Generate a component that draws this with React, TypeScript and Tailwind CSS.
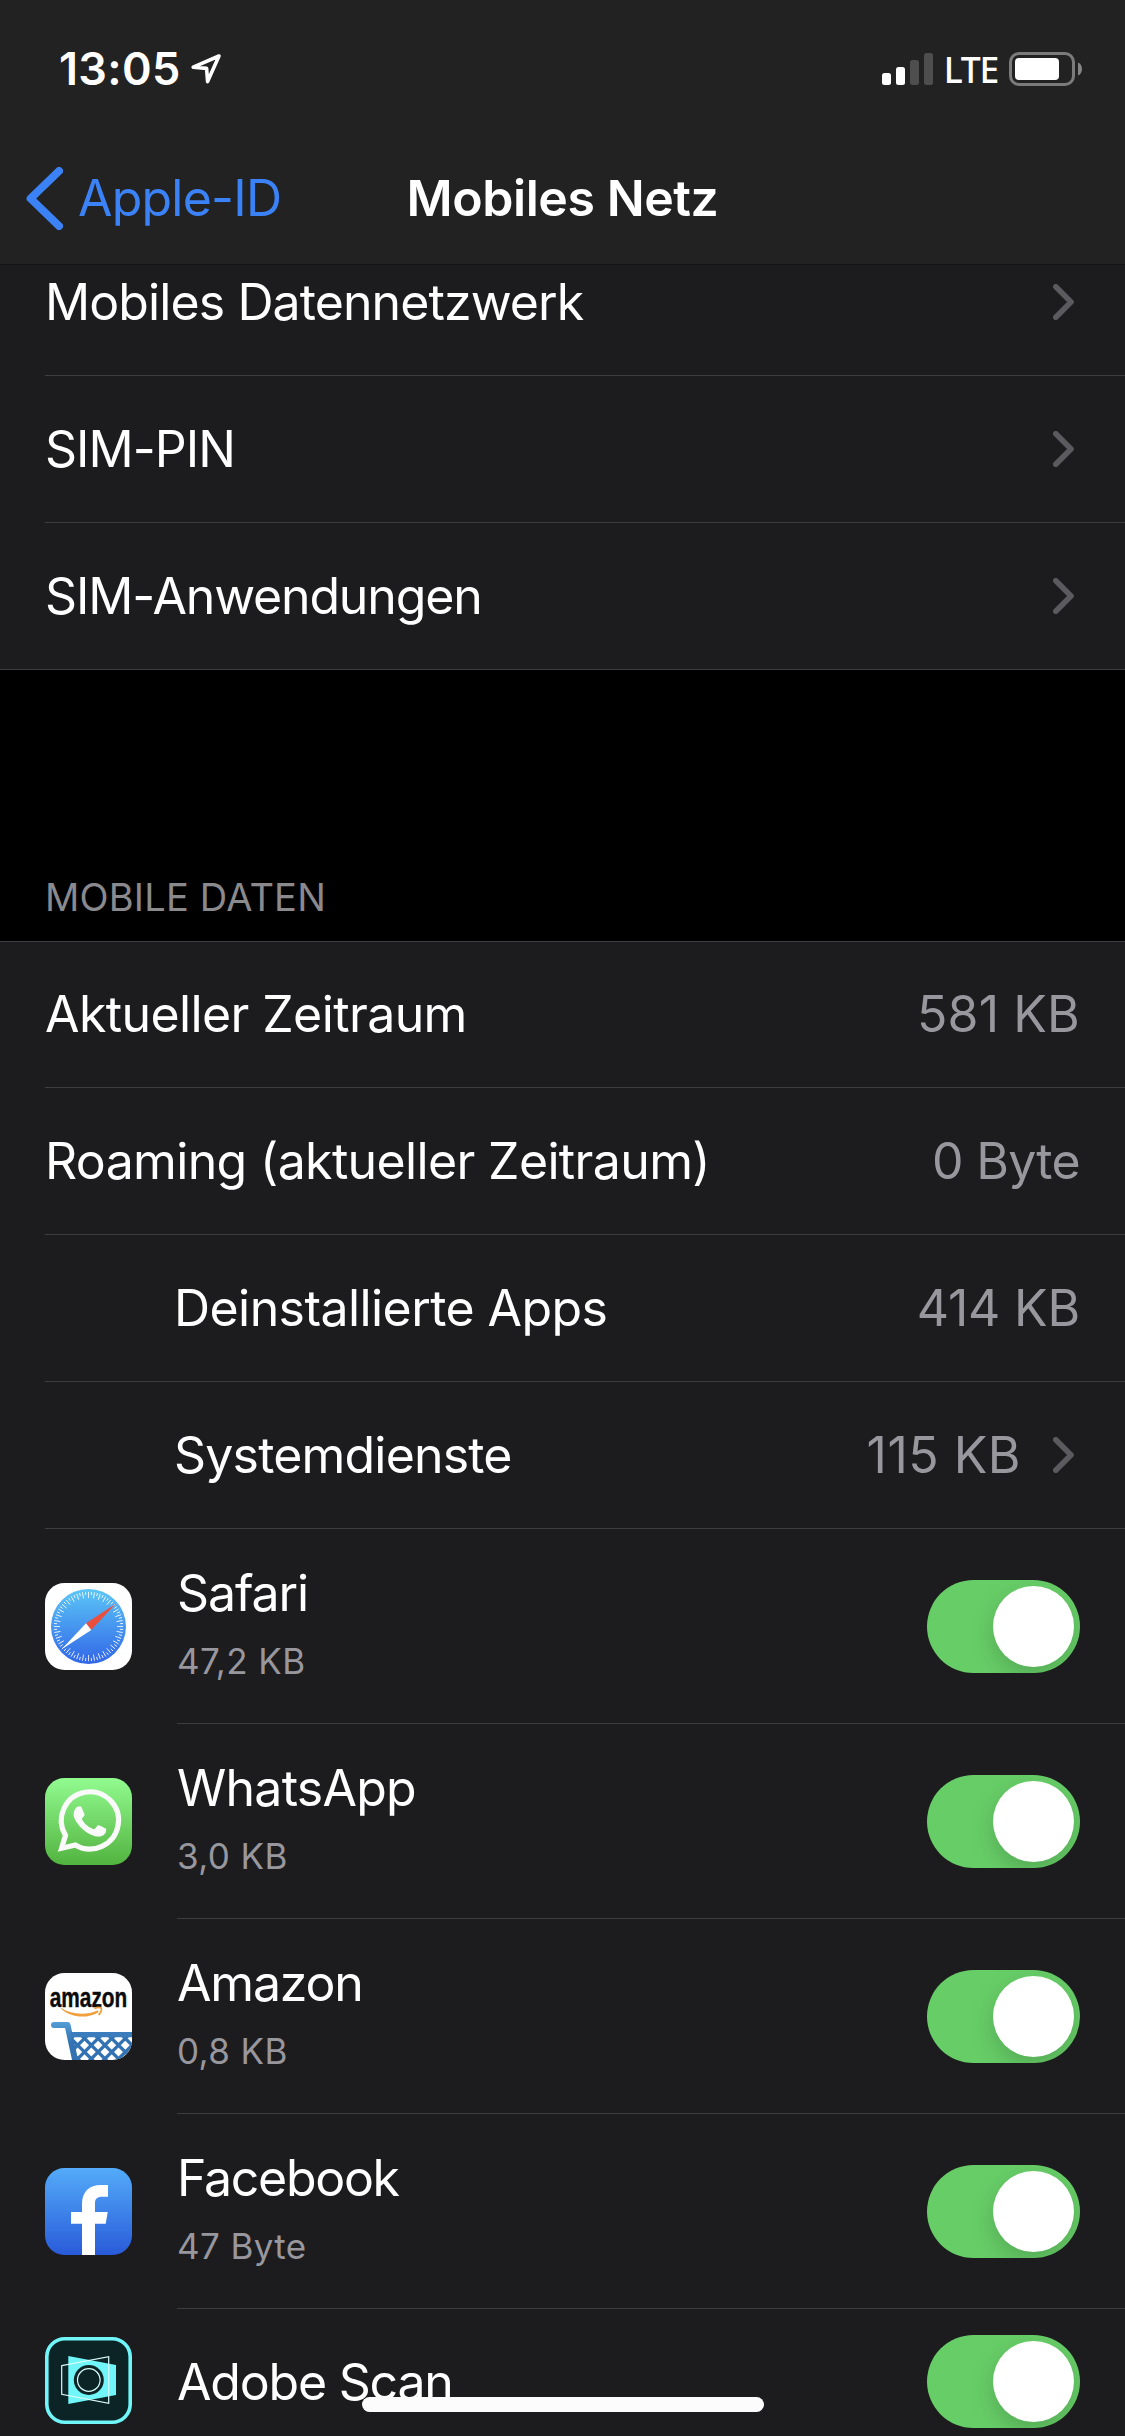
import React from 'react';

const SafariIcon = () => (
  <svg width="87" height="87" viewBox="0 0 87 87" className="shrink-0">
    <defs>
      <linearGradient id="safari" x1="0" y1="0" x2="0" y2="1">
        <stop offset="0" stopColor="#5cc6f6" />
        <stop offset="1" stopColor="#3166e8" />
      </linearGradient>
    </defs>
    <rect width="87" height="87" rx="19.5" fill="#fff" />
    <circle cx="43.5" cy="43.5" r="37.5" fill="url(#safari)" />
    {Array.from({ length: 72 }, (_, i) => (
      <line
        key={i}
        x1="43.5"
        y1="8.8"
        x2="43.5"
        y2={i % 2 ? 12 : 15}
        stroke="#fff"
        strokeWidth="0.8"
        transform={`rotate(${i * 5} 43.5 43.5)`}
      />
    ))}
    <path d="M70.7 20.7 41 40.3l5.3 6.7z" fill="#ea4f3d" />
    <path d="M16.7 66.3 41 40.3l5.3 6.7z" fill="#fff" />
  </svg>
);

const WhatsAppIcon = () => (
  <svg width="87" height="87" viewBox="0 0 87 87" className="shrink-0">
    <defs>
      <linearGradient id="whatsapp" x1="0" y1="0" x2="0" y2="1">
        <stop offset="0" stopColor="#92fb90" />
        <stop offset="1" stopColor="#52b33f" />
      </linearGradient>
    </defs>
    <rect width="87" height="87" rx="19.5" fill="url(#whatsapp)" />
    <path
      d="M16.6 70.2 20.5 57.3A28.6 28.6 0 1 1 30.3 67z"
      fill="none"
      stroke="#fafafa"
      strokeWidth="5.2"
    />
    <path
      transform="translate(12.4 11.4) scale(2.7 2.68)"
      fill="#fafafa"
      d="M17.472 14.382c-.297-.149-1.758-.867-2.03-.967-.273-.099-.471-.148-.67.15-.197.297-.767.966-.94 1.164-.173.199-.347.223-.644.075-.297-.15-1.255-.463-2.39-1.475-.883-.788-1.48-1.761-1.653-2.059-.173-.297-.018-.458.13-.606.134-.133.298-.347.446-.52.149-.174.198-.298.298-.497.099-.198.05-.371-.025-.52-.075-.149-.669-1.612-.916-2.207-.242-.579-.487-.5-.669-.51-.173-.008-.371-.01-.57-.01-.198 0-.52.074-.792.372-.272.297-1.04 1.016-1.04 2.479 0 1.462 1.065 2.875 1.213 3.074.149.198 2.096 3.2 5.077 4.487.709.306 1.262.489 1.694.625.712.227 1.36.195 1.871.118.571-.085 1.758-.719 2.006-1.413.248-.694.248-1.289.173-1.413-.074-.124-.272-.198-.57-.347"
    />
  </svg>
);

const AmazonIcon = () => (
  <svg width="87" height="87" viewBox="0 0 87 87" className="shrink-0">
    <defs>
      <linearGradient id="cart" gradientUnits="userSpaceOnUse" x1="0" y1="49" x2="0" y2="70">
        <stop offset="0" stopColor="#549dd5" />
        <stop offset="1" stopColor="#3272b2" />
      </linearGradient>
      <clipPath id="tile">
        <rect width="87" height="87" rx="19.5" />
      </clipPath>
      <clipPath id="basket">
        <path d="M26 60H87V87H31z" />
      </clipPath>
    </defs>
    <rect width="87" height="87" rx="19.5" fill="#fff" />
    <text
      transform="translate(4.8 34) scale(0.77 1)"
      className="font-['Liberation_Sans',sans-serif] text-[27px] font-bold"
      fill="#0b0b0b"
      stroke="#0b0b0b"
      strokeWidth="0.4"
    >
      amazon
    </text>
    <path d="M16 34.8C27 42.2 42 42.3 53 37.2L53.6 39.2C42 46 26 45 16 35.8z" fill="#ef9f3b" />
    <path d="M49.5 35.6C52 34.4 55 34.3 56.3 35.2 57 37 55.5 40.4 53.6 42" fill="none" stroke="#ef9f3b" strokeWidth="1.8" />
    <g clipPath="url(#tile)">
      <path d="M9 52H22.5L30.3 88" fill="none" stroke="url(#cart)" strokeWidth="6" strokeLinecap="round" strokeLinejoin="round" />
      <g clipPath="url(#basket)" stroke="#3272b2" strokeWidth="3.3">
        {Array.from({ length: 12 }, (_, i) => {
          const x = -48 + i * 13.6;
          return (
            <g key={i}>
              <path d={`M${x + 10.4} 56.3l40 40`} />
              <path d={`M${x + 55.8} 56.3l-40 40`} />
            </g>
          );
        })}
      </g>
      <path d="M25 59H87V64.3H26z" fill="#3b7dbc" />
    </g>
  </svg>
);

const FacebookIcon = () => (
  <svg width="87" height="87" viewBox="0 0 87 87" className="shrink-0">
    <defs>
      <linearGradient id="facebook" x1="0" y1="0" x2="0" y2="1">
        <stop offset="0" stopColor="#53abf9" />
        <stop offset="1" stopColor="#295bd9" />
      </linearGradient>
    </defs>
    <rect width="87" height="87" rx="19.5" fill="url(#facebook)" />
    <path
      d="M37 87V55.7H26V44H37V36C37 24 44 17 56 17H63V28.7H57C52 28.7 50 31 50 35V44H62.7L60.7 55.7H50V87Z"
      fill="#fff"
    />
  </svg>
);

const AdobeScanIcon = () => (
  <svg width="87" height="87" viewBox="0 0 87 87" className="mb-0.5 shrink-0">
    <rect x="1.8" y="1.8" width="83.4" height="83.4" rx="18" fill="#0c2426" stroke="#70f6f9" strokeWidth="3.6" />
    <path d="M23.3 19 71 28V58L23.3 67z" fill="#70f6f9" />
    <circle cx="43.8" cy="43" r="15" fill="#0c2426" />
    <path d="M16.7 28.7 63.7 19.7V66.3L16.7 57.3z" fill="none" stroke="#d8fcfd" strokeWidth="1.2" />
    <circle cx="43.8" cy="43" r="11.3" fill="none" stroke="#d8fcfd" strokeWidth="1.2" />
  </svg>
);

const Chevron = () => (
  <svg width="21" height="36" viewBox="0 0 21 36" className="shrink-0">
    <path d="M2.8 2.8 18 18 2.8 33.2" fill="none" stroke="#5b5b5f" strokeWidth="5.6" strokeLinecap="round" strokeLinejoin="round" />
  </svg>
);

const Toggle = () => (
  <div className="flex h-[93px] w-[153px] shrink-0 justify-end overflow-hidden rounded-full bg-[#67ce67] p-1.5">
    <div className="size-[81px] rounded-full bg-white shadow-[0_9px_24px_rgba(0,0,0,0.18)]" />
  </div>
);

const StatusBar = () => (
  <div className="flex h-[132px] items-center justify-between pt-[5px] pr-[43px] pl-[59px]">
    <div className="flex items-center">
      <span className="text-[45px] font-semibold tracking-[0.3px]">13:05</span>
      <svg width="32" height="32" viewBox="0 0 32 32" className="ml-[9px]">
        <path d="M29 3 3.2 14.2 16.6 15.4 17.6 28.6z" fill="none" stroke="#fff" strokeWidth="3.6" strokeLinejoin="round" />
      </svg>
    </div>
    <div className="flex items-center">
      <svg width="51" height="32" viewBox="0 0 51 32">
        <rect x="0" y="20" width="9" height="12" rx="2.5" fill="#fff" />
        <rect x="14" y="14" width="9" height="18" rx="2.5" fill="#fff" />
        <rect x="28" y="7" width="9" height="25" rx="2.5" fill="#4e4e4e" />
        <rect x="42" y="0" width="9" height="32" rx="2.5" fill="#4e4e4e" />
      </svg>
      <span className="w-[76px] pt-0.5 text-center font-['Noto_Sans',sans-serif] text-[35.5px] leading-none font-medium tracking-[-1.2px]">
        LTE
      </span>
      <svg width="73" height="34" viewBox="0 0 73 34">
        <rect x="1.5" y="1.5" width="63" height="31" rx="8.5" fill="none" stroke="#7b7b7b" strokeWidth="3" />
        <rect x="6" y="6" width="44" height="22" rx="4" fill="#fff" />
        <path d="M69 10.5c5.3 2 5.3 11 0 13z" fill="#868686" />
      </svg>
    </div>
  </div>
);

const links = [
  { name: 'Mobiles Datennetzwerk', tracking: 'tracking-[-0.9px]', divider: 'ml-[45px]' },
  { name: 'SIM-PIN', tracking: 'tracking-[-0.97px]', divider: 'ml-[45px]' },
  { name: 'SIM-Anwendungen', tracking: 'tracking-[-1.15px]', divider: '' },
];

const totals = [
  { name: 'Aktueller Zeitraum', tracking: 'tracking-[-0.6px]', value: '581 KB', valueTracking: 'tracking-[0.16px]', height: 'h-[145px] pb-px' },
  { name: 'Roaming (aktueller Zeitraum)', tracking: 'tracking-[-0.64px]', value: '0 Byte', valueTracking: 'tracking-[-0.7px]', height: 'h-[146px]' },
  { name: 'Deinstallierte Apps', tracking: 'tracking-[-0.57px]', value: '414 KB', valueTracking: 'tracking-[-0.2px]', height: 'h-[146px]', indent: true },
  { name: 'Systemdienste', tracking: 'tracking-[-0.81px]', value: '115 KB', valueTracking: 'tracking-[0.5px]', height: 'h-[146px]', indent: true, link: true },
];

const apps = [
  { name: 'Safari', tracking: 'tracking-[-1.1px]', usage: '47,2 KB', icon: <SafariIcon /> },
  { name: 'WhatsApp', tracking: 'tracking-[-0.75px]', usage: '3,0 KB', icon: <WhatsAppIcon /> },
  { name: 'Amazon', tracking: 'tracking-[-1.2px]', usage: '0,8 KB', icon: <AmazonIcon /> },
  { name: 'Facebook', tracking: 'tracking-[-1.3px]', usage: '47 Byte', icon: <FacebookIcon /> },
  { name: 'Adobe Scan', tracking: 'tracking-[-1.2px]', icon: <AdobeScanIcon /> },
];

const App = () => {
  return (
    <div className="relative h-[2436px] w-[1125px] overflow-hidden bg-black text-[50px] leading-[60px] text-white font-['Inter',sans-serif]">
      <header className="relative z-10 border-b border-[#141414] bg-[#222222]">
        <StatusBar />
        <nav className="grid h-[132px] grid-cols-[1fr_auto_1fr] items-center">
          <a className="flex items-center pl-[26px] text-[#3b82f7]">
            <svg width="37" height="63" viewBox="0 0 37 63">
              <path d="M33 4 4.6 31.5 33 59" fill="none" stroke="currentColor" strokeWidth="8" strokeLinecap="round" strokeLinejoin="round" />
            </svg>
            <span className="ml-[15px] tracking-[-0.79px]">Apple-ID</span>
          </a>
          <h1 className="font-semibold tracking-[-0.43px]">Mobiles Netz</h1>
        </nav>
      </header>

      {/* first group is scrolled partly under the header */}
      <section className="-mt-9 bg-[#1c1c1e]">
        {links.map((link) => (
          <div key={link.name}>
            <div className="flex h-[146px] items-center justify-between pr-[51px] pl-[45px]">
              <span className={link.tracking}>{link.name}</span>
              <Chevron />
            </div>
            <div className={`h-px bg-[#3d3d40] ${link.divider}`} />
          </div>
        ))}
      </section>

      <h2 className="flex h-[271px] items-end pb-[21px] pl-[45px] text-[38px] leading-[46px] tracking-[0.2px] text-[#8a898e]">
        MOBILE DATEN
      </h2>

      <section className="border-t border-[#3d3d40] bg-[#1c1c1e]">
        {totals.map((row) => (
          <div key={row.name}>
            <div className={`flex items-center ${row.height} ${row.indent ? 'pl-[174px]' : 'pl-[45px]'} ${row.link ? 'pr-[51px]' : 'pr-[45px]'}`}>
              <span className={`flex-1 ${row.tracking}`}>{row.name}</span>
              <span className={`text-[#98979e] ${row.valueTracking}`}>{row.value}</span>
              {row.link && (
                <div className="ml-8">
                  <Chevron />
                </div>
              )}
            </div>
            <div className="ml-[45px] h-px bg-[#3d3d40]" />
          </div>
        ))}

        {apps.map((app) => (
          <div key={app.name}>
            <div className={`flex items-center pt-px pr-[45px] pl-[45px] ${app.usage ? 'h-[194px]' : 'h-[144px]'}`}>
              {app.icon}
              <div className={`ml-[45px] flex flex-1 flex-col gap-4 ${app.usage ? 'pb-[7px]' : ''}`}>
                <span className={app.tracking}>{app.name}</span>
                {app.usage && (
                  <span className="text-[35px] leading-[44px] tracking-[0.4px] text-[#98979e]">{app.usage}</span>
                )}
              </div>
              <Toggle />
            </div>
            <div className="ml-[177px] h-px bg-[#3d3d40]" />
          </div>
        ))}
      </section>

      {/* home indicator */}
      <div className="absolute top-[2397px] left-[362px] z-20 h-[15px] w-[402px] rounded-full bg-[#fcfcfc]" />
    </div>
  );
};

export default App;
